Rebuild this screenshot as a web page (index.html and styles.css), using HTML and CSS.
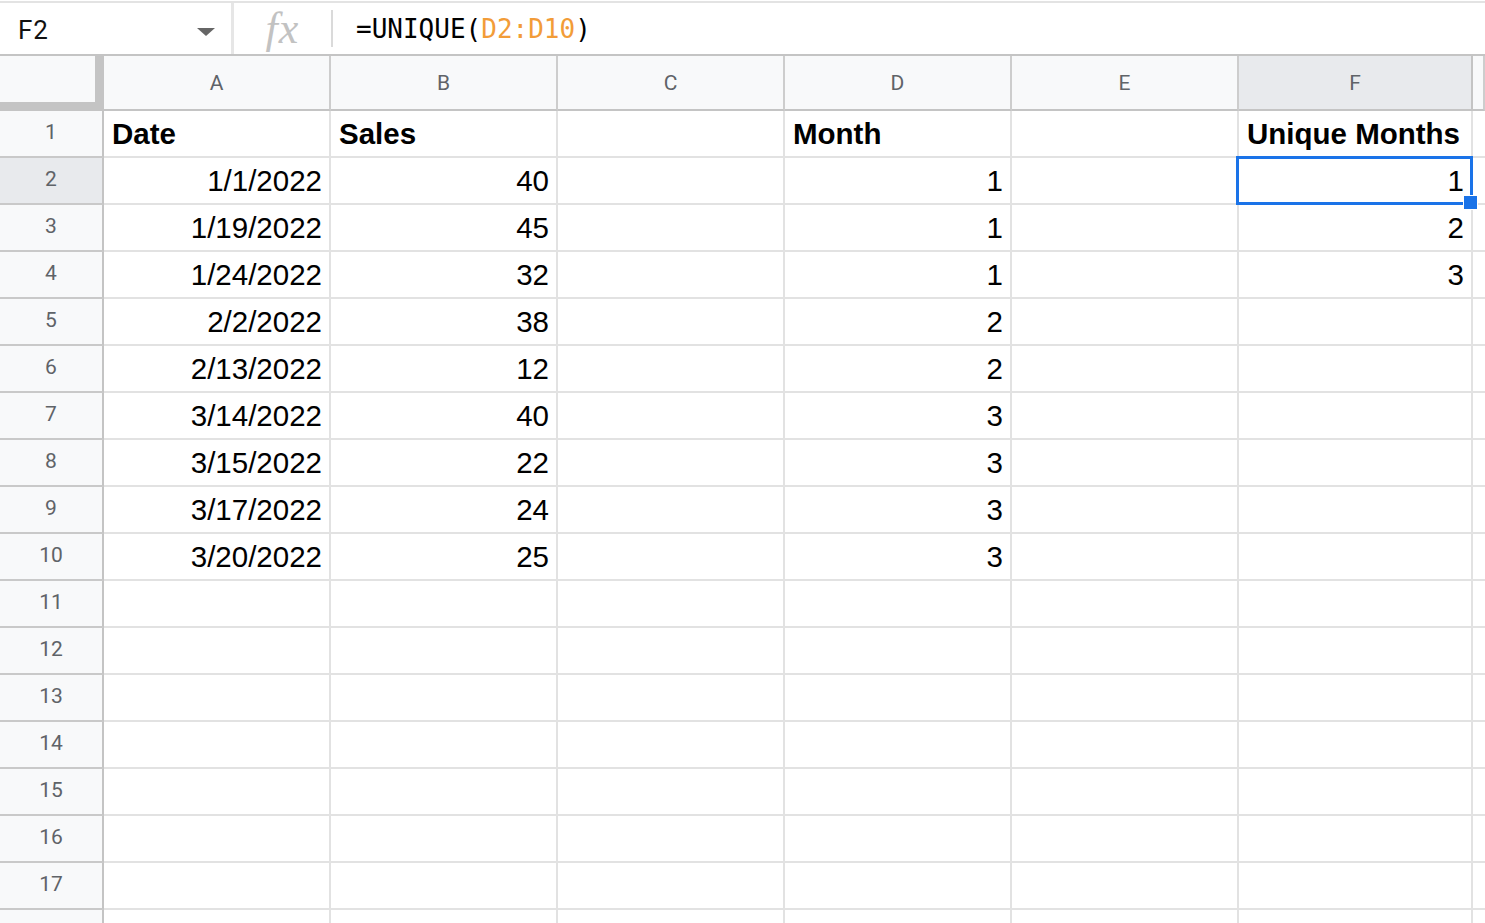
FILE: index.html
```html
<!DOCTYPE html>
<html lang="en">
<head>
    <meta charset="UTF-8">
    <title>Unique Months - Sheet</title>
    <link rel="stylesheet" href="styles.css">
</head>
<body>
    <div class="formula-bar">
        <div class="name-box">
            <span class="cell-ref">F2</span>
            <span class="caret"></span>
        </div>
        <div class="fx-box"><span class="fx">fx</span></div>
        <div class="formula">=UNIQUE(<span class="range">D2:D10</span>)</div>
    </div>

    <div class="sheet">
        <!-- column headers -->
        <div class="row head">
            <div class="corner"></div>
            <div class="col-head">A</div>
            <div class="col-head">B</div>
            <div class="col-head">C</div>
            <div class="col-head">D</div>
            <div class="col-head">E</div>
            <div class="col-head active">F</div>
            <div class="col-head"></div>
        </div>

        <div class="row">
            <div class="row-head">1</div>
            <div class="cell bold">Date</div>
            <div class="cell bold">Sales</div>
            <div class="cell"></div>
            <div class="cell bold">Month</div>
            <div class="cell"></div>
            <div class="cell bold">Unique Months</div>
            <div class="cell"></div>
        </div>
        <div class="row">
            <div class="row-head active">2</div>
            <div class="cell num">1/1/2022</div>
            <div class="cell num">40</div>
            <div class="cell"></div>
            <div class="cell num">1</div>
            <div class="cell"></div>
            <div class="cell num selected">1
                <div class="selection"></div>
                <div class="fill-handle"></div>
            </div>
            <div class="cell"></div>
        </div>
        <div class="row">
            <div class="row-head">3</div>
            <div class="cell num">1/19/2022</div>
            <div class="cell num">45</div>
            <div class="cell"></div>
            <div class="cell num">1</div>
            <div class="cell"></div>
            <div class="cell num">2</div>
            <div class="cell"></div>
        </div>
        <div class="row">
            <div class="row-head">4</div>
            <div class="cell num">1/24/2022</div>
            <div class="cell num">32</div>
            <div class="cell"></div>
            <div class="cell num">1</div>
            <div class="cell"></div>
            <div class="cell num">3</div>
            <div class="cell"></div>
        </div>
        <div class="row">
            <div class="row-head">5</div>
            <div class="cell num">2/2/2022</div>
            <div class="cell num">38</div>
            <div class="cell"></div>
            <div class="cell num">2</div>
            <div class="cell"></div>
            <div class="cell"></div>
            <div class="cell"></div>
        </div>
        <div class="row">
            <div class="row-head">6</div>
            <div class="cell num">2/13/2022</div>
            <div class="cell num">12</div>
            <div class="cell"></div>
            <div class="cell num">2</div>
            <div class="cell"></div>
            <div class="cell"></div>
            <div class="cell"></div>
        </div>
        <div class="row">
            <div class="row-head">7</div>
            <div class="cell num">3/14/2022</div>
            <div class="cell num">40</div>
            <div class="cell"></div>
            <div class="cell num">3</div>
            <div class="cell"></div>
            <div class="cell"></div>
            <div class="cell"></div>
        </div>
        <div class="row">
            <div class="row-head">8</div>
            <div class="cell num">3/15/2022</div>
            <div class="cell num">22</div>
            <div class="cell"></div>
            <div class="cell num">3</div>
            <div class="cell"></div>
            <div class="cell"></div>
            <div class="cell"></div>
        </div>
        <div class="row">
            <div class="row-head">9</div>
            <div class="cell num">3/17/2022</div>
            <div class="cell num">24</div>
            <div class="cell"></div>
            <div class="cell num">3</div>
            <div class="cell"></div>
            <div class="cell"></div>
            <div class="cell"></div>
        </div>
        <div class="row">
            <div class="row-head">10</div>
            <div class="cell num">3/20/2022</div>
            <div class="cell num">25</div>
            <div class="cell"></div>
            <div class="cell num">3</div>
            <div class="cell"></div>
            <div class="cell"></div>
            <div class="cell"></div>
        </div>

        <!-- empty rows -->
        <div class="row"><div class="row-head">11</div><div class="cell"></div><div class="cell"></div><div class="cell"></div><div class="cell"></div><div class="cell"></div><div class="cell"></div><div class="cell"></div></div>
        <div class="row"><div class="row-head">12</div><div class="cell"></div><div class="cell"></div><div class="cell"></div><div class="cell"></div><div class="cell"></div><div class="cell"></div><div class="cell"></div></div>
        <div class="row"><div class="row-head">13</div><div class="cell"></div><div class="cell"></div><div class="cell"></div><div class="cell"></div><div class="cell"></div><div class="cell"></div><div class="cell"></div></div>
        <div class="row"><div class="row-head">14</div><div class="cell"></div><div class="cell"></div><div class="cell"></div><div class="cell"></div><div class="cell"></div><div class="cell"></div><div class="cell"></div></div>
        <div class="row"><div class="row-head">15</div><div class="cell"></div><div class="cell"></div><div class="cell"></div><div class="cell"></div><div class="cell"></div><div class="cell"></div><div class="cell"></div></div>
        <div class="row"><div class="row-head">16</div><div class="cell"></div><div class="cell"></div><div class="cell"></div><div class="cell"></div><div class="cell"></div><div class="cell"></div><div class="cell"></div></div>
        <div class="row"><div class="row-head">17</div><div class="cell"></div><div class="cell"></div><div class="cell"></div><div class="cell"></div><div class="cell"></div><div class="cell"></div><div class="cell"></div></div>
        <div class="row"><div class="row-head">18</div><div class="cell"></div><div class="cell"></div><div class="cell"></div><div class="cell"></div><div class="cell"></div><div class="cell"></div><div class="cell"></div></div>
    </div>
</body>
</html>
```

FILE: styles.css
```css
* {
    margin: 0;
    padding: 0;
    box-sizing: border-box;
}

body {
    background: #fff;
    height: 923px;
    overflow: hidden;
    padding-top: 1px;
    font-family: 'Liberation Sans', Arial, sans-serif;
}

/* 公式栏 */
.formula-bar {
    display: flex;
    align-items: stretch;
    height: 55px;
    border-top: 2px solid #e3e3e3;
    border-bottom: 2px solid #c4c4c4;
}

.name-box {
    width: 234px;
    display: flex;
    align-items: center;
    justify-content: space-between;
    padding: 0 16px 0 18px;
    border-right: 3px solid #e6e6e6;
}

.cell-ref {
    font-family: Roboto, 'Liberation Sans', sans-serif;
    font-size: 26px;
    letter-spacing: 1px;
    color: #111;
    margin-top: 2px;
}

.caret {
    width: 0;
    height: 0;
    border-left: 9px solid transparent;
    border-right: 9px solid transparent;
    border-top: 8px solid #666;
    margin-top: 6px;
}

.fx-box {
    width: 99px;
    height: 37px;
    align-self: center;
    display: flex;
    align-items: center;
    justify-content: center;
    border-right: 2px solid #dadada;
}

.fx {
    font-family: 'Liberation Serif', 'Times New Roman', serif;
    font-style: italic;
    font-size: 44px;
    color: #c2c2c2;
    letter-spacing: 1px;
}

.formula {
    display: flex;
    align-items: center;
    padding-left: 23px;
    font-family: 'DejaVu Sans Mono', 'Liberation Mono', monospace;
    font-size: 26px;
    color: #000;
    white-space: pre;
    margin-top: 1px;
}

.range {
    color: #f29c38;
}

/* 表格区域 */
.row {
    display: grid;
    grid-template-columns: 104px 227px 227px 227px 227px 227px 234px 1fr;
    height: 47px;
}

.row.head {
    height: 55px;
}

.corner {
    background: #f8f9fa;
    border-right: 9px solid #c4c4c4;
    border-bottom: 9px solid #c4c4c4;
}

.col-head {
    display: flex;
    align-items: center;
    justify-content: center;
    background: #f8f9fa;
    border-right: 2px solid #cdcdcd;
    border-bottom: 2px solid #c4c4c4;
    font-family: Roboto, 'Liberation Sans', sans-serif;
    font-size: 21px;
    color: #5f6368;
}

.col-head.active {
    background: #e8eaed;
    border-right-color: #c4c4c4;
}

.row-head {
    display: flex;
    align-items: center;
    justify-content: center;
    background: #f8f9fa;
    border-right: 2px solid #c4c4c4;
    border-bottom: 2px solid #c9c9c9;
    font-family: Roboto, 'Liberation Sans', sans-serif;
    font-size: 21px;
    color: #5f6368;
    padding-bottom: 3px;
}

.row-head.active {
    background: #e8eaed;
}

.cell {
    position: relative;
    display: flex;
    align-items: center;
    padding: 0 8px;
    border-right: 2px solid #e2e2e2;
    border-bottom: 2px solid #e2e2e2;
    font-size: 29.5px;
    color: #000;
    white-space: nowrap;
}

.cell.bold {
    font-weight: bold;
}

.cell.num {
    justify-content: flex-end;
    padding-right: 7px;
}

/* 选中单元格 */
.selection {
    position: absolute;
    z-index: 2;
    left: -3px;
    top: -2px;
    width: 237px;
    height: 49px;
    border: 3px solid #1a73e8;
    pointer-events: none;
}

.fill-handle {
    position: absolute;
    z-index: 3;
    left: 224px;
    top: 37px;
    width: 15px;
    height: 15px;
    background: #1a73e8;
    border: 1px solid #fff;
}
```
